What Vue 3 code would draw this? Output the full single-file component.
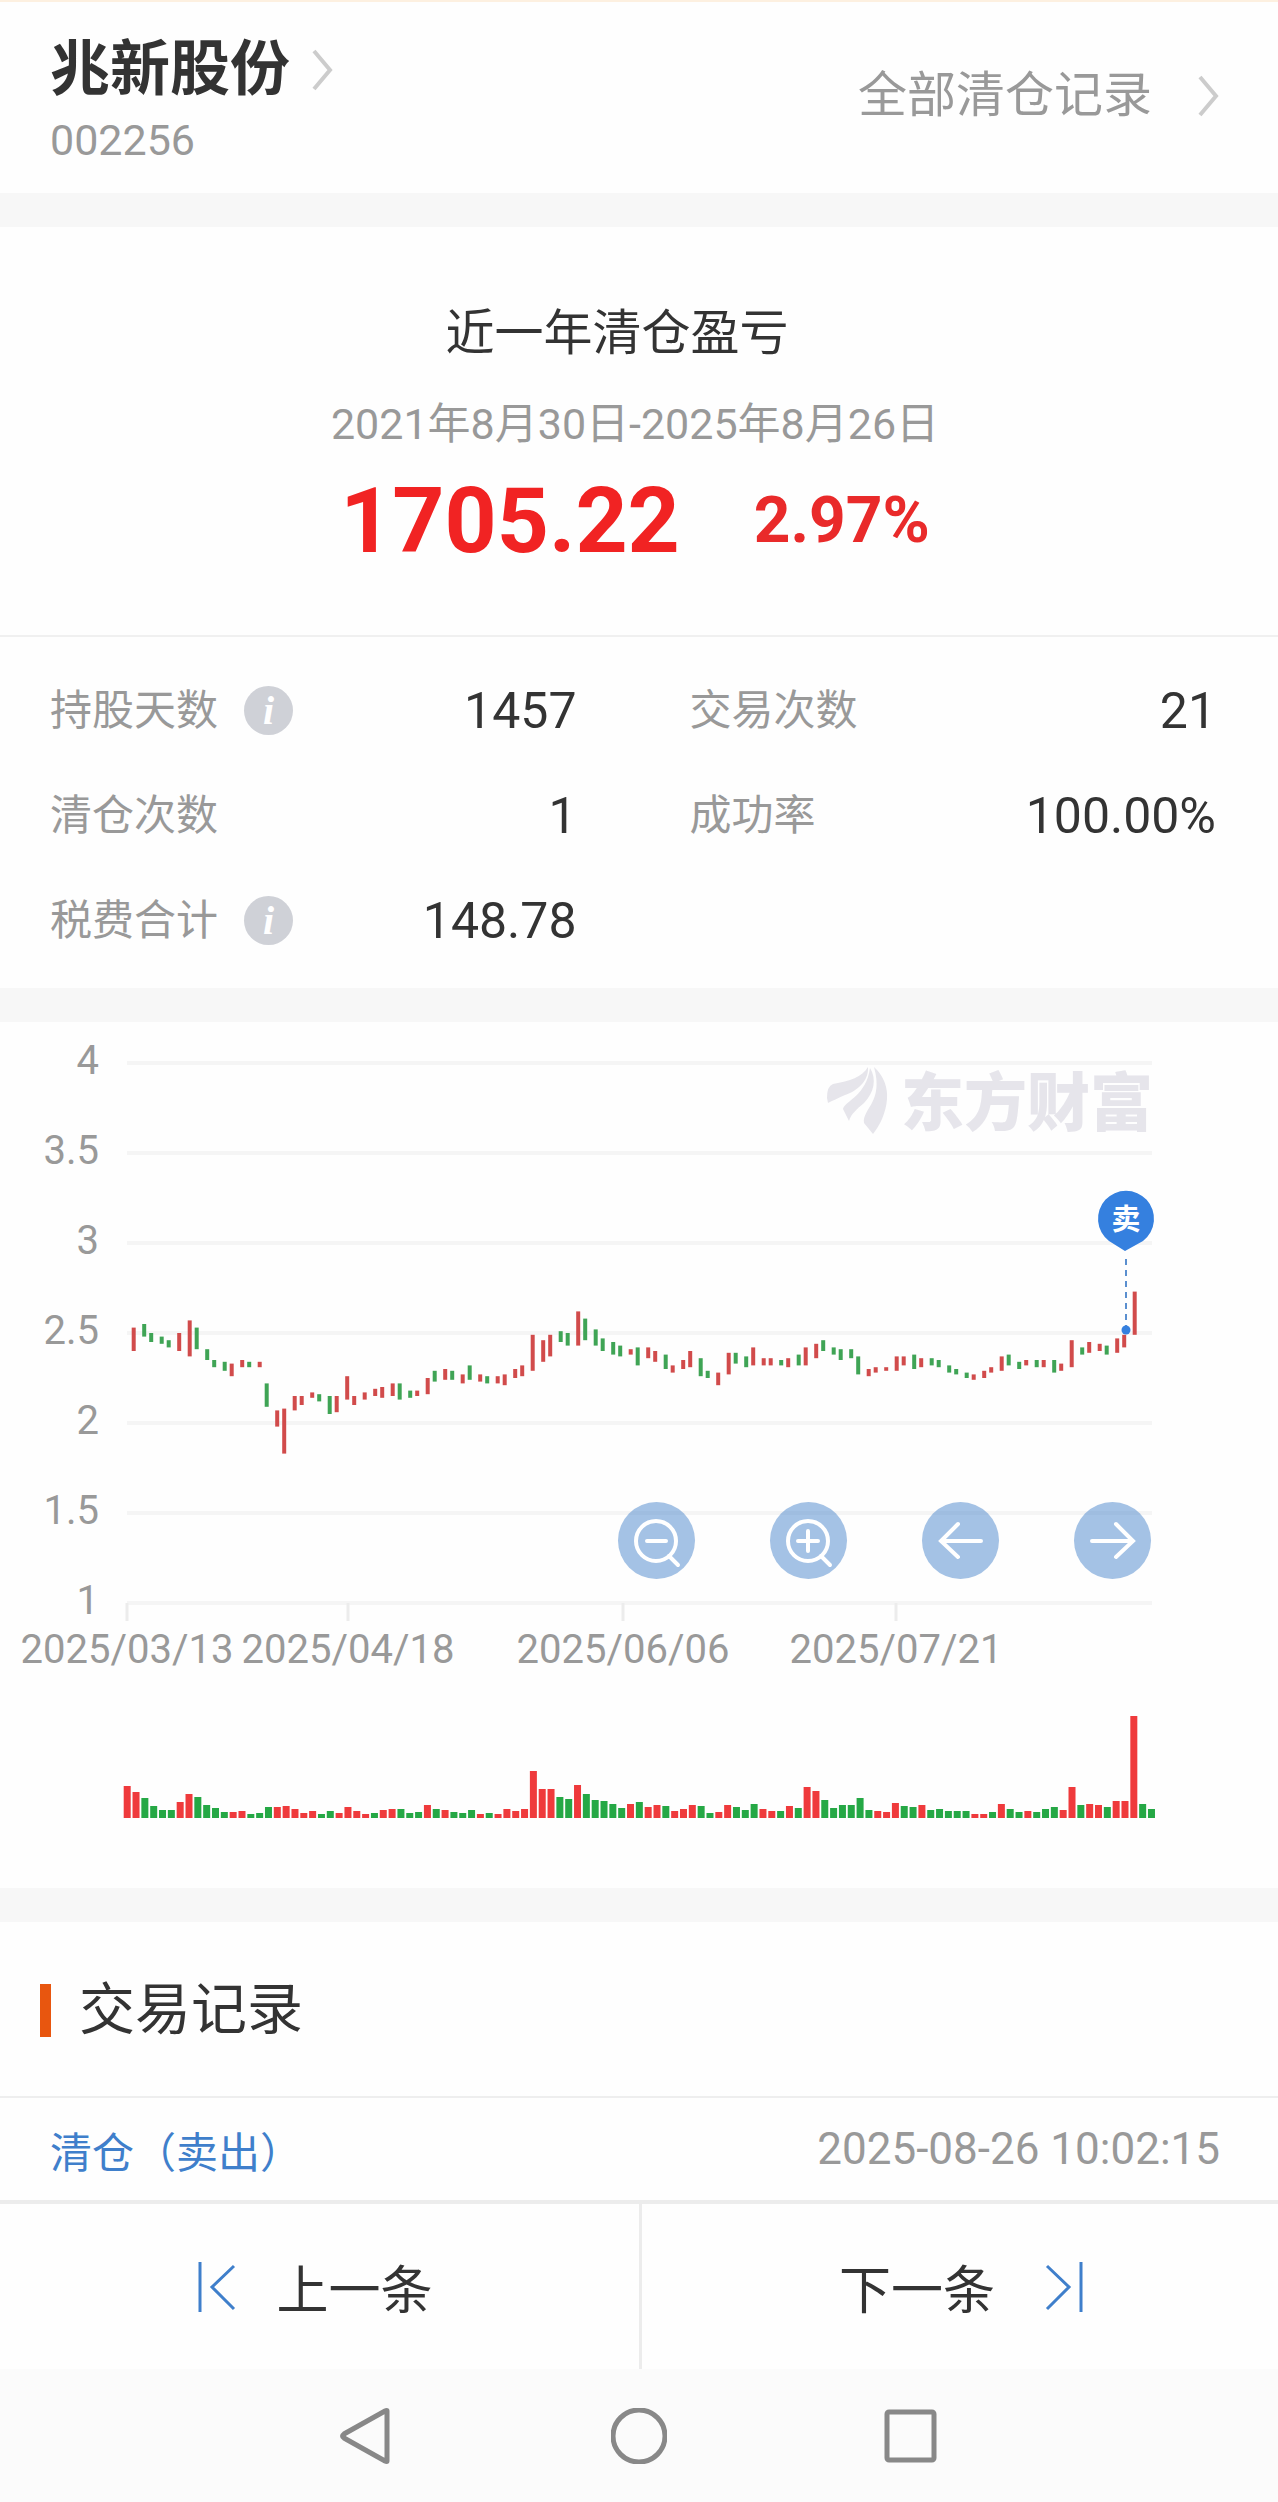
<script setup>
import { computed } from "vue";

const stats = [
  { label: "持股天数", value: "1457", info: true },
  { label: "交易次数", value: "21" },
  { label: "清仓次数", value: "1" },
  { label: "成功率", value: "100.00%" },
  { label: "税费合计", value: "148.78", info: true },
];

const prices = [4, 3.5, 3, 2.5, 2, 1.5, 1];
const dates = [
  { x: 127, text: "2025/03/13" },
  { x: 348, text: "2025/04/18" },
  { x: 623, text: "2025/06/06" },
  { x: 896, text: "2025/07/21" },
];

// r = up, g = down, then high-low in cents
const candleData = `
  r253-240 g255-248 g250-245 g248-244 g246-242 r250-240 r257-237 g253-241 g241-235 g235-231
  g234-229 r233-226 r235-231 g234-231 r234-231 g222-209 r207-198 r208-183 r215-207 r215-210
  r217-214 g216-212 g215-205 r215-206 r226-213 r215-210 r217-213 r219-215 r220-214 r222-215
  g222-213 g218-214 r218-215 r225-216 g229-223 r230-224 g229-224 r227-222 g232-224 r227-223
  g226-222 r226-222 r227-221 r230-225 r232-226 r249-229 r246-234 r249-237 g251-245 g250-243
  r262-243 g258-246 g252-243 g247-240 g245-238 g243-237 r241-238 g242-232 r242-236 r240-234
  g238-230 r232-228 r235-230 r240-231 g236-226 g229-225 r228-221 r239-227 g239-233 g237-231
  r242-232 r236-232 r236-232 g235-232 r236-231 g238-232 r242-232 r244-236 g246-240 g242-238
  g241-235 g241-236 g237-227 r230-226 r231-228 r231-229 r237-229 r237-232 g238-230 r236-231
  g236-232 g235-231 g232-228 g230-227 g228-225 r227-224 r229-225 r231-228 r237-229 g238-232
  g234-230 r235-232 g235-231 r235-231 g235-228 r233-229 r246-231 g242-238 r245-239 r244-240
  g243-238 r247-239 r249-242 r273-249`;

const volumeData = `
  r32 r26 g20 g12 g8 g8 r16 r24 g21 g13 g10 g6 r6 r7 g4 g5 g11 r11 r12 r9 r5 r7 g4 g7 r5 r11
  r7 r4 g5 r8 r9 g9 g5 g6 r13 g9 r8 g6 g5 g8 r4 g5 r4 r9 r7 r9 r47 r29 r29 g21 g19 r33 g24
  g18 g17 g14 g10 r14 g16 r11 r13 g12 r7 r9 r13 g12 g5 r6 r13 g11 g8 g14 r9 r7 g7 r12 g10
  r31 r27 g18 g10 g13 g13 g20 g8 r7 r6 r15 g12 g11 r13 g8 g9 g7 g7 g7 r4 r4 g6 r14 g9 g6 r7
  g6 g9 g11 r8 r31 g13 r14 r13 g11 r17 r17 r102 g14 g9`;

function priceY(p) {
  return 41 + (4 - p) * 180;
}

const candles = computed(() =>
  candleData.trim().split(/\s+/).map((item, i) => {
    const [high, low] = item.slice(1).split("-").map((n) => priceY(n / 100));
    return {
      up: item[0] === "r",
      x: 131.7 + 3.5 * Math.floor(i * 2.525 + 0.87),
      y: high,
      height: low - high,
    };
  })
);

const volumes = computed(() =>
  volumeData.trim().split(/\s+/).map((item, i) => ({
    up: item[0] === "r",
    x: 123.7 + i * 8.83,
    height: Number(item.slice(1)),
  }))
);
</script>

<template>
  <div class="page">
    <header class="header">
      <div>
        <h1 class="stock-name">
          兆新股份
          <svg class="chevron" viewBox="0 0 22 42"><path d="M2 2 L18 21 L2 40" /></svg>
        </h1>
        <div class="stock-code">002256</div>
      </div>
      <a class="all-records" href="#">
        全部清仓记录
        <svg class="chevron" viewBox="0 0 22 42"><path d="M2 2 L18 21 L2 40" /></svg>
      </a>
    </header>

    <section class="summary">
      <h2>近一年清仓盈亏</h2>
      <div class="period">2021年8月30日-2025年8月26日</div>
      <div class="profit">
        <strong class="amount">1705.22</strong>
        <strong class="rate">2.97%</strong>
      </div>
    </section>

    <dl class="stats">
      <div v-for="s in stats" :key="s.label" class="stat">
        <dt>
          {{ s.label }}
          <button v-if="s.info" class="info" type="button" :aria-label="s.label + '说明'">i</button>
        </dt>
        <dd>{{ s.value }}</dd>
      </div>
    </dl>

    <section class="chart">
      <svg class="plot" viewBox="0 0 1278 866">
        <g class="grid">
          <line v-for="p in prices" :key="p" x1="127" x2="1152" :y1="priceY(p)" :y2="priceY(p)" />
          <line v-for="d in dates" :key="d.x" class="tick" :x1="d.x" :x2="d.x" y1="581" y2="599" />
        </g>
        <g class="axis">
          <text v-for="p in prices" :key="p" x="99" :y="priceY(p) + 11" text-anchor="end">{{ p }}</text>
          <text v-for="d in dates" :key="d.x" :x="d.x" y="641" text-anchor="middle">{{ d.text }}</text>
        </g>

        <g class="watermark">
          <path d="M827 76 Q827 64 833 62 C850 59 862 55 868 45 C869 59 857 69 845 73 C838 76 832 79 828 81 Z" />
          <path d="M843 87 C846 78 866 74 870 46 C877 57 874 71 864 81 C857 87 851 92 849 99 Z" />
          <path d="M874 45 C884 54 888 66 887 77 C886 91 880 103 873 112 L864 101 C862 87 884 80 874 45 Z" />
          <text x="901" y="103">东方财富</text>
        </g>

        <rect
          v-for="(c, i) in candles"
          :key="'c' + i"
          :class="c.up ? 'candle-up' : 'candle-down'"
          :x="c.x"
          :y="c.y"
          width="4"
          :height="c.height"
        />
        <rect
          v-for="(v, i) in volumes"
          :key="'v' + i"
          :class="v.up ? 'volume-up' : 'volume-down'"
          :x="v.x"
          :y="796 - v.height"
          width="7"
          :height="v.height"
        />

        <g class="marker">
          <line x1="1126" x2="1126" y1="237" y2="304" />
          <circle cx="1126" cy="308" r="4.5" />
          <path d="M1125 229 L1109 219 A28 28 0 1 1 1143 219 Z" />
          <text x="1126" y="208" text-anchor="middle">卖</text>
        </g>
      </svg>

      <div class="tools">
        <button type="button" aria-label="缩小">
          <svg viewBox="0 0 77 77"><circle cx="38" cy="39" r="20" /><path d="M29 39 H48 M51 54 L60 63" /></svg>
        </button>
        <button type="button" aria-label="放大">
          <svg viewBox="0 0 77 77"><circle cx="38" cy="39" r="20" /><path d="M28 39 H48 M38 29 V49 M51 54 L60 63" /></svg>
        </button>
        <button type="button" aria-label="向左">
          <svg viewBox="0 0 77 77"><path d="M59 39 H19 M36 22 L19 39 L36 55" /></svg>
        </button>
        <button type="button" aria-label="向右">
          <svg viewBox="0 0 77 77"><path d="M18 39 H58 M42 22 L59 39 L42 55" /></svg>
        </button>
      </div>
    </section>

    <section class="records">
      <h2>交易记录</h2>
      <div class="record">
        <span class="type">清仓（卖出）</span>
        <time>2025-08-26 10:02:15</time>
      </div>
    </section>

    <nav class="pager">
      <button class="prev" type="button">
        <svg viewBox="0 0 38 50"><path d="M2 0 V50 M36 4 L14 25 L36 47" /></svg>
        上一条
      </button>
      <button class="next" type="button">
        下一条
        <svg viewBox="0 0 38 50"><path d="M36 0 V50 M2 4 L24 25 L2 47" /></svg>
      </button>
    </nav>

    <nav class="system-bar">
      <button type="button" aria-label="返回">
        <svg viewBox="0 0 56 56"><path d="M48 3 V53 Q48 54 46 53 L5 30 Q2 28 5 26 L46 3 Q48 2 48 3 Z" /></svg>
      </button>
      <button type="button" aria-label="主页">
        <svg viewBox="0 0 56 56"><circle cx="28" cy="28" r="26" /></svg>
      </button>
      <button type="button" aria-label="最近任务">
        <svg viewBox="0 0 56 56"><rect x="4" y="4" width="47" height="48" rx="2" /></svg>
      </button>
    </nav>
  </div>
</template>

<style>
body {
  margin: 0;
  background: #fefefe;
}
</style>

<style scoped>
.page {
  font-family: Roboto, "Noto Sans CJK SC", sans-serif;
  font-size: 42px;
  color: #333;
  background: #fefefe;
}

h1,
h2,
dl,
dd {
  margin: 0;
}

button {
  padding: 0;
  border: 0;
  background: none;
  font: inherit;
  color: inherit;
  cursor: pointer;
}

svg {
  display: block;
  fill: none;
}

.header {
  display: flex;
  justify-content: space-between;
  align-items: center;
  padding: 24px 58px 27px 50px;
  border-top: 2px solid #fdf0e0;
}

.stock-name {
  display: flex;
  align-items: center;
  gap: 22px;
  font-size: 60px;
  line-height: 88px;
}

.stock-code {
  font-size: 43px;
  line-height: 52px;
  color: #999;
}

.chevron {
  width: 22px;
  height: 42px;
  stroke: #ccc;
  stroke-width: 4;
}

.all-records {
  display: flex;
  align-items: center;
  gap: 46px;
  font-size: 49px;
  line-height: 72px;
  color: #999;
  text-decoration: none;
}

.summary {
  display: flex;
  flex-direction: column;
  align-items: center;
  padding: 69px 0 64px;
  border-top: 34px solid #f7f7f7;
  border-bottom: 2px solid #f0f0f0;
}

.summary h2 {
  padding-right: 44px;
  font-size: 49px;
  font-weight: 400;
  line-height: 76px;
}

.period {
  margin-top: 20px;
  padding-right: 8px;
  font-size: 43px;
  line-height: 64px;
  color: #999;
}

.profit {
  display: flex;
  align-items: center;
  gap: 74px;
  margin-top: 15px;
  padding-right: 8px;
  line-height: 100px;
  color: #f12323;
}

.amount {
  font-size: 91px;
}

.rate {
  font-size: 64px;
  color: #e92a2a;
}

.stats {
  display: grid;
  grid-template-columns: 1fr 1fr;
  column-gap: 113px;
  padding: 21px 62px 15px 50px;
}

.stat {
  display: flex;
  justify-content: space-between;
  align-items: center;
  height: 105px;
}

dt {
  display: flex;
  align-items: center;
  gap: 26px;
  line-height: 56px;
  color: #999;
}

dd {
  font-size: 50px;
}

.info {
  width: 49px;
  height: 49px;
  border-radius: 50%;
  background: #cfd1d7;
  color: #fff;
  font: italic bold 40px/46px "Liberation Serif", serif;
}

.chart {
  position: relative;
  border-top: 34px solid #f7f7f7;
}

.plot {
  width: 100%;
}

.grid line {
  stroke: #f5f5f5;
  stroke-width: 4;
}

.grid .tick {
  stroke: #ececec;
  stroke-width: 3;
}

.axis text {
  font-size: 40px;
  fill: #999;
}

.watermark {
  fill: #e6e5eb;
}

.watermark text {
  font-size: 63px;
  font-weight: 900;
}

.candle-up {
  fill: #d14b4b;
}

.candle-down {
  fill: #3fa455;
}

.volume-up {
  fill: #ef3a3c;
}

.volume-down {
  fill: #25a845;
}

.marker {
  fill: #3580df;
}

.marker line {
  stroke: #5a8fcf;
  stroke-width: 2;
  stroke-dasharray: 6 5;
}

.marker text {
  font-size: 29px;
  font-weight: 700;
  fill: #fff;
}

.tools {
  position: absolute;
  top: 480px;
  right: 127px;
  display: flex;
  gap: 75px;
}

.tools button {
  width: 77px;
  height: 77px;
  border-radius: 50%;
  background: rgba(74, 134, 203, 0.5);
}

.tools svg {
  stroke: #fff;
  stroke-width: 4;
  stroke-linecap: round;
}

.records {
  border-top: 34px solid #f7f7f7;
}

.records h2 {
  display: flex;
  align-items: center;
  gap: 28px;
  padding: 2px 40px 0;
  font-size: 56px;
  font-weight: 400;
  line-height: 172px;
}

.records h2::before {
  content: "";
  width: 11px;
  height: 53px;
  background: #e8560f;
}

.record {
  display: flex;
  justify-content: space-between;
  align-items: center;
  height: 102px;
  padding: 0 58px 0 50px;
  border-top: 2px solid #eee;
}

.type {
  color: #3f7fcb;
}

time {
  font-size: 44px;
  color: #999;
}

.pager {
  display: grid;
  grid-template-columns: 1fr 1fr;
  border-top: 4px solid #ececec;
}

.pager button {
  display: flex;
  justify-content: center;
  align-items: center;
  height: 165px;
  font-size: 52px;
}

.pager svg {
  width: 38px;
  height: 50px;
  stroke: #3f7fcb;
  stroke-width: 3;
}

.pager .prev {
  gap: 40px;
  padding-right: 8px;
}

.pager .next {
  gap: 50px;
  padding-left: 2px;
  border-left: 3px solid #ececec;
}

.system-bar {
  display: flex;
  justify-content: center;
  align-items: center;
  gap: 216px;
  height: 133px;
  background: #fbfbfb;
}

.system-bar svg {
  width: 56px;
  height: 56px;
  stroke: #888;
  stroke-width: 5;
}
</style>
